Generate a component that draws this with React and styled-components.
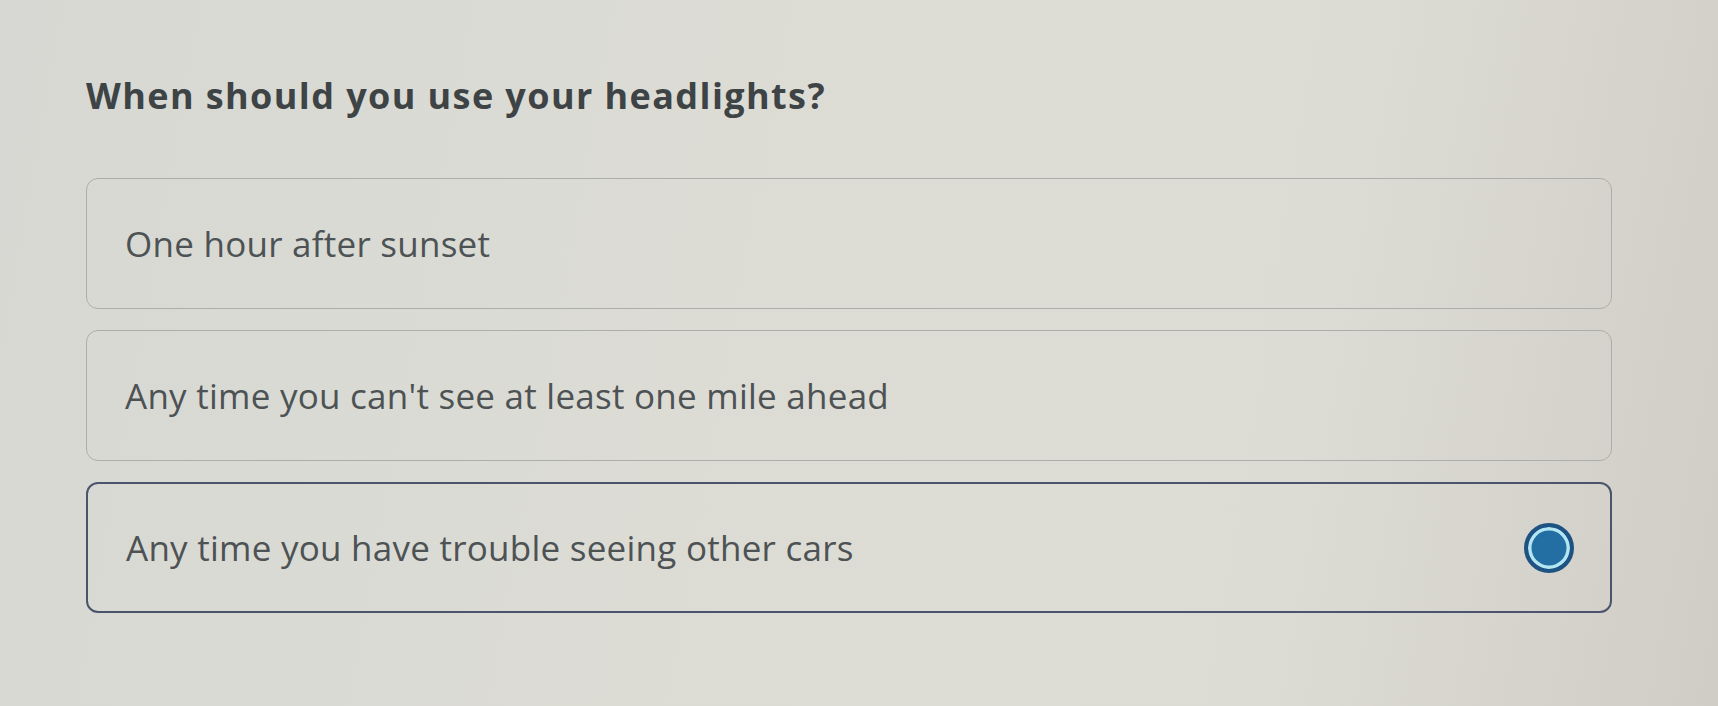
import React, { useState } from "react"
import styled, { createGlobalStyle } from "styled-components"

const Global = createGlobalStyle`
  html, body {
    margin: 0;
    padding: 0;
  }
  body {
    background: linear-gradient(100deg, #d7d8d3 0%, #dcdcd5 40%, #dddcd4 75%, #cfcdc5 100%);
    font-family: "Open Sans", Lato, sans-serif;
    min-height: 706px;
  }
`

const Page = styled.div`
  padding: 74px 106px 0 86px;
`

const Question = styled.h1`
  margin: 0 0 60px 0;
  font-size: 36px;
  font-weight: 700;
  color: #3e4345;
  line-height: 44px;
  letter-spacing: 1.4px;
`

const Options = styled.div`
  display: flex;
  flex-direction: column;
  gap: 21px;
`

const Option = styled.button`
  display: flex;
  align-items: center;
  justify-content: space-between;
  height: 131px;
  padding: 0 36px 0 38px;
  box-sizing: border-box;
  border-radius: 12px;
  background: transparent;
  border: ${(p) => (p.$selected ? "2.5px solid #4b546c" : "1.5px solid #acafa7")};
  font-family: inherit;
  font-size: 35px;
  letter-spacing: 0.25px;
  color: #4d5254;
  text-align: left;
  cursor: pointer;
`

const Radio = styled.span`
  width: 50px;
  height: 50px;
  border-radius: 50%;
  box-sizing: border-box;
  background: #236ea3;
  border: 4px solid #1d5283;
  box-shadow: inset 0 0 0 3.5px #b4e6f2;
`

const answers = [
  "One hour after sunset",
  "Any time you can't see at least one mile ahead",
  "Any time you have trouble seeing other cars",
]

export default function App() {
  const [picked, setPicked] = useState(2)
  return (
    <Page>
      <Global />
      <Question>When should you use your headlights?</Question>
      <Options>
        {answers.map((a, i) => (
          <Option key={a} $selected={picked === i} onClick={() => setPicked(i)}>
            {a}
            {picked === i && <Radio />}
          </Option>
        ))}
      </Options>
    </Page>
  )
}
